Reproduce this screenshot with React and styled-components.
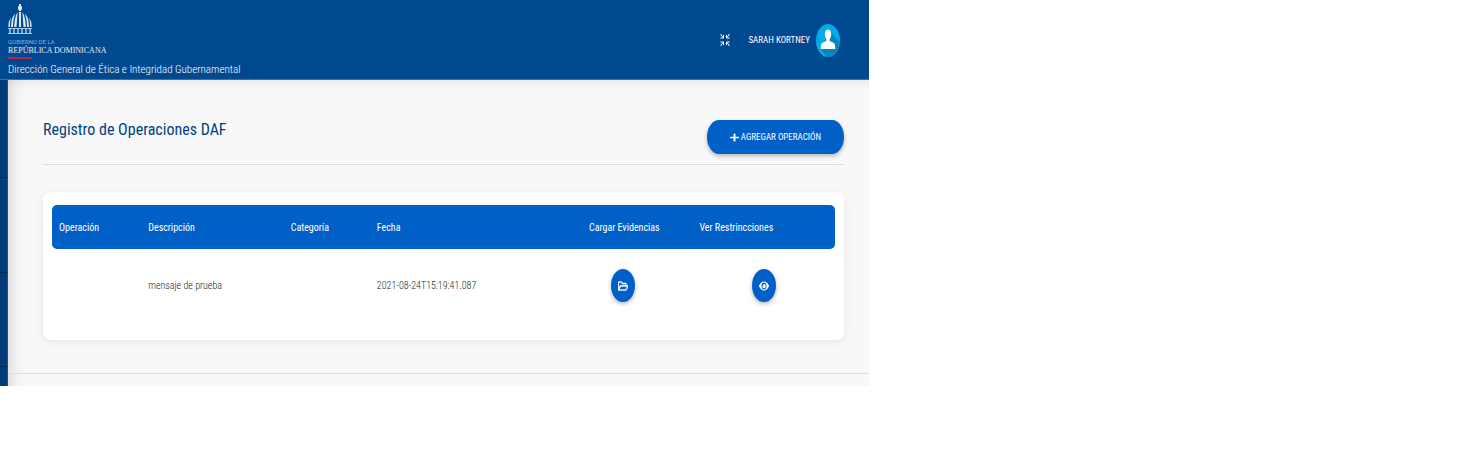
import React from "react";
import styled, { createGlobalStyle } from "styled-components";
import { FaPlus, FaRegFolderOpen, FaEye } from "react-icons/fa";

const Global = createGlobalStyle`
  * { box-sizing: border-box; }
  body {
    margin: 0;
    background: #fff;
    font-family: "Roboto Condensed", "Liberation Sans Narrow", Roboto, sans-serif;
  }
  button, table { font-family: inherit; }
`;

const Page = styled.div`
  width: 59.6%;
  background: #f8f8f8;
`;

const Header = styled.header`
  display: flex;
  justify-content: space-between;
  min-height: 80px;
  padding: 3px 29px 0 8px;
  background: #004990;
  border-bottom: 1px solid #3474b4;
  color: #fff;
`;

const Brand = styled.a`
  display: block;
  color: inherit;
  text-decoration: none;
`;

const Dome = styled.svg`
  display: block;
  width: 24px;
  height: 32px;
`;

const Government = styled.div`
  margin-top: 3px;
  font: 6px/7px Roboto, sans-serif;
  color: #7fb4d8;
`;

const Country = styled.div`
  font: 8px/11px "Liberation Serif", serif;
  color: #e4eef6;
`;

const RedRule = styled.div`
  width: 24px;
  height: 2px;
  margin-top: 1px;
  background: #b8234a;
`;

const Agency = styled.div`
  margin-top: 3px;
  font-size: 11px;
  font-weight: 300;
  line-height: 16px;
  white-space: nowrap;
`;

const UserArea = styled.div`
  display: flex;
  align-items: center;
  height: 74px;
`;

const PlainButton = styled.button`
  display: flex;
  align-items: center;
  gap: 6px;
  padding: 0;
  border: 0;
  background: none;
  color: #fff;
  font-size: 9px;
  font-weight: 400;
  white-space: nowrap;
`;

const Collapse = styled(PlainButton)`
  margin-right: 18px;
`;

const Body = styled.div`
  display: flex;
`;

const Sidebar = styled.aside`
  flex: none;
  width: 8px;
  background: repeating-linear-gradient(#003a78 0 97px, #00254f 97px 98px, #003a78 98px 192px, #00254f 192px 193px, #003a78 193px 286px, #00254f 286px 287px);
  border-right: 1px solid #12559a;
`;

const Content = styled.div`
  flex: 1;
  min-width: 0;
  background:
    linear-gradient(to right, rgba(0, 0, 0, 0.09), rgba(0, 0, 0, 0.02) 10px, transparent 20px),
    linear-gradient(rgba(0, 0, 0, 0.05), transparent 10px);
`;

const Main = styled.main`
  padding: 40px 25px 33px 35px;
`;

const TitleRow = styled.div`
  display: flex;
  justify-content: space-between;
  align-items: flex-start;
  padding-bottom: 10px;
  border-bottom: 1px solid #dcdcdc;
`;

const Title = styled.h1`
  margin: 0;
  font-size: 16px;
  line-height: 20px;
  font-weight: 400;
  color: #00427f;
`;

const AddButton = styled.button`
  display: flex;
  align-items: center;
  justify-content: center;
  gap: 2px;
  width: 137px;
  height: 34px;
  padding: 0;
  border: 0;
  border-radius: 12px / 17px;
  background: #0060c8;
  color: #fff;
  font-size: 9px;
  font-weight: 400;
  white-space: nowrap;
  box-shadow: 0 2px 4px rgba(0, 0, 0, 0.28);
`;

const Card = styled.section`
  margin-top: 27px;
  padding: 13px 9px 18px;
  border-radius: 8px;
  background: #fff;
  box-shadow: 0 2px 8px rgba(0, 0, 0, 0.08);
`;

const Table = styled.table`
  width: 100%;
  border-collapse: separate;
  border-spacing: 0;
  table-layout: fixed;
`;

const Column = styled.col`
  width: ${(p) => p.$width};
`;

const HeadCell = styled.th`
  height: 44px;
  padding: 0 7px;
  background: #0060c8;
  color: #fff;
  font-size: 10px;
  font-weight: 400;
  text-align: left;
  white-space: nowrap;
  &:first-child { border-radius: 5px 0 0 5px; }
  &:last-child { border-radius: 0 5px 5px 0; }
`;

const Cell = styled.td`
  height: 73px;
  padding: 0 7px;
  font-size: 10px;
  font-weight: 300;
  color: #222;
  white-space: nowrap;
`;

const ActionCell = styled(Cell)`
  padding: 0 ${(p) => p.$inset || "0"} 0 0;
`;

const RoundButton = styled.button`
  display: flex;
  align-items: center;
  justify-content: center;
  width: 24px;
  height: 33px;
  margin: 0 auto;
  padding: 0;
  border: 0;
  border-radius: 50%;
  background: #0060c8;
  color: #fff;
  box-shadow: 0 2px 4px rgba(0, 0, 0, 0.28);
`;

const Footer = styled.footer`
  height: 13px;
  border-top: 1px solid #dcdcdc;
`;

function DomeLogo() {
  return (
    <Dome viewBox="0 0 24 32" aria-hidden="true">
      <g fill="#dce9f4">
        <rect x="11" y="1" width="2" height="7" />
        <rect x="10" y="3" width="4" height="4" rx="1" />
        <path d="M11 9h2v15h-2zM9.600 9L8.500 24H6.200Q6.500 14 9.600 9zM14.400 9L15.500 24h2.300Q17.500 14 14.400 9zM7.600 10.500Q5 15 5 24H3Q3 14 7.600 10.500zM16.400 10.500Q19 15 19 24h2Q21 14 16.400 10.500zM3.500 14.500Q1.500 18 2 24H.5Q0 18 3.500 14.500zM20.500 14.500Q22.500 18 22 24h1.500Q24 18 20.500 14.500z" />
      </g>
      <path d="M0 25.500h24M0 30.500h24" stroke="#a9cae3" />
      <path d="M2 26v4M6 26v4M10 26v4M14 26v4M18 26v4M22 26v4" stroke="#a9cae3" strokeWidth="1.500" />
    </Dome>
  );
}

function CollapseIcon() {
  return (
    <svg width="10" height="14" viewBox="0 0 10 14" fill="none" stroke="#fff" aria-hidden="true">
      <path d="M0.500 1L3 4.500M3.500 2v3H.5M9.500 1L7 4.500M6.500 2v3h3M0.500 13L3 9.500M3.500 12V9H.5M9.500 13L7 9.500M6.500 12V9h3" />
    </svg>
  );
}

function Avatar() {
  return (
    <svg width="24" height="33" viewBox="0 0 24 33" aria-hidden="true">
      <defs>
        <clipPath id="avatar"><ellipse cx="12" cy="16.500" rx="12" ry="16.500" /></clipPath>
      </defs>
      <g clipPath="url(#avatar)">
        <rect width="24" height="33" fill="#03a9e8" />
        <path d="M14 7L24 19V33H11L5 25z" fill="#0586bd" />
        <path d="M12 5.500c2 0 3.200 2 3.200 4.500 0 2.200-.6 4-1.500 5v2l4.300 2c1 .8 1.300 3.500 1.300 6H4.700c0-2.500.3-5.200 1.300-6l4.300-2v-2c-.9-1-1.500-2.800-1.500-5 0-2.500 1.200-4.500 3.200-4.500z" fill="#fff" />
      </g>
    </svg>
  );
}

export default function App() {
  return (
    <>
      <Global />
      <Page>
        <Header>
          <Brand href="#">
            <DomeLogo />
            <Government>GOBIERNO DE LA</Government>
            <Country>REPÚBLICA DOMINICANA</Country>
            <RedRule />
            <Agency>Dirección General de Ética e Integridad Gubernamental</Agency>
          </Brand>
          <UserArea>
            <Collapse aria-label="Contraer"><CollapseIcon /></Collapse>
            <PlainButton>SARAH KORTNEY<Avatar /></PlainButton>
          </UserArea>
        </Header>
        <Body>
          <Sidebar />
          <Content>
            <Main>
              <TitleRow>
                <Title>Registro de Operaciones DAF</Title>
                <AddButton>
                  <FaPlus width={7} height={10} size={null} preserveAspectRatio="none" />
                  AGREGAR OPERACIÓN
                </AddButton>
              </TitleRow>
              <Card>
                <Table>
                  <colgroup>
                    <Column $width="11.4%" />
                    <Column $width="18.2%" />
                    <Column $width="11%" />
                    <Column $width="27.1%" />
                    <Column $width="14.1%" />
                    <Column $width="18.2%" />
                  </colgroup>
                  <thead>
                    <tr>
                      <HeadCell>Operación</HeadCell>
                      <HeadCell>Descripción</HeadCell>
                      <HeadCell>Categoría</HeadCell>
                      <HeadCell>Fecha</HeadCell>
                      <HeadCell>Cargar Evidencias</HeadCell>
                      <HeadCell>Ver Restrincciones</HeadCell>
                    </tr>
                  </thead>
                  <tbody>
                    <tr>
                      <Cell />
                      <Cell>mensaje de prueba</Cell>
                      <Cell />
                      <Cell>2021-08-24T15:19:41.087</Cell>
                      <ActionCell $inset="28px">
                        <RoundButton aria-label="Cargar evidencias">
                          <FaRegFolderOpen size={10} viewBox="0 48 576 416" preserveAspectRatio="none" stroke="currentColor" strokeWidth={20} />
                        </RoundButton>
                      </ActionCell>
                      <ActionCell>
                        <RoundButton aria-label="Ver restricciones">
                          <FaEye size={10} viewBox="0 48 576 416" preserveAspectRatio="none" />
                        </RoundButton>
                      </ActionCell>
                    </tr>
                  </tbody>
                </Table>
              </Card>
            </Main>
            <Footer />
          </Content>
        </Body>
      </Page>
    </>
  );
}
